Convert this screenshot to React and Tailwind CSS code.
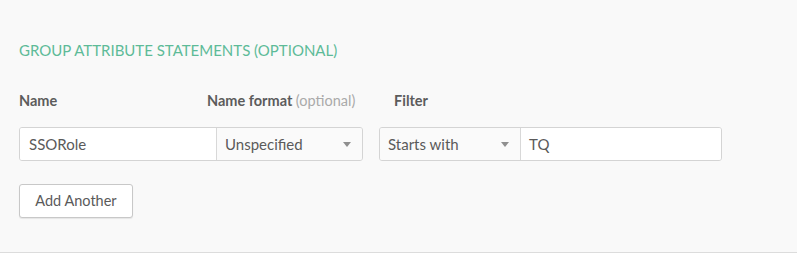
import React from "react";

const font = { fontFamily: '"Lato", "Open Sans", "Liberation Sans", sans-serif' };

function Caret() {
  return (
    <svg width="8" height="5" viewBox="0 0 8 5" className="shrink-0">
      <path d="M0 0h8L4 5z" fill="#8f8f8f" />
    </svg>
  );
}

export default function App() {
  return (
    <div className="w-full bg-white" style={font}>
      <div className="h-[253px] w-[797px] bg-[#f9f9f9] border-b border-[#dcdcdc] pl-[19px] pt-[40px]">
        {/* Section title */}
        <h3 className="text-[15px] leading-[20px] text-[#5dbb98]">
          GROUP ATTRIBUTE STATEMENTS (OPTIONAL)
        </h3>

        {/* Labels */}
        <div className="flex mt-[32px] text-[14.5px] leading-[18px] font-bold text-[#5c5c5c]">
          <div className="w-[188px]">Name</div>
          <div className="w-[187px]">
            Name format <span className="font-normal text-[#aaaaaa]">(optional)</span>
          </div>
          <div>Filter</div>
        </div>

        {/* Inputs */}
        <div className="flex mt-[17px] gap-[16px] text-[15px] text-[#5a5a5a]">
          <div className="flex h-[34px] rounded-[3px] border border-[#d4d4d4] overflow-hidden">
            <div className="w-[196px] bg-white flex items-center pl-[9px]">SSORole</div>
            <div className="w-[146px] bg-[#fafafa] border-l border-[#d8d8d8] flex items-center justify-between pl-[8px] pr-[11px]">
              <span>Unspecified</span>
              <Caret />
            </div>
          </div>
          <div className="flex h-[34px] rounded-[3px] border border-[#d4d4d4] overflow-hidden">
            <div className="w-[140px] bg-[#fafafa] flex items-center justify-between pl-[8px] pr-[11px]">
              <span>Starts with</span>
              <Caret />
            </div>
            <div className="w-[201px] bg-white border-l border-[#d8d8d8] flex items-center pl-[8px]">TQ</div>
          </div>
        </div>

        {/* Button */}
        <button className="mt-[23px] h-[34px] w-[114px] rounded-[3px] border border-[#c8c8c8] bg-white text-[14.5px] text-[#5a5a5a] shadow-[0_1px_1px_rgba(0,0,0,0.08)]">
          Add Another
        </button>
      </div>
    </div>
  );
}
